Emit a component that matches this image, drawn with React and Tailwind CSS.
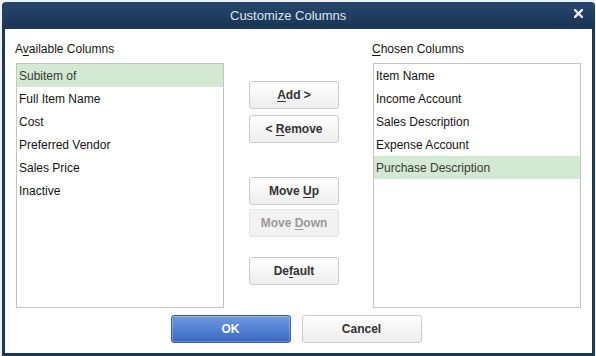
import React from "react";

const font = { fontFamily: '"Liberation Sans", Arial, sans-serif' };

function U({ children }) {
  return <span className="underline underline-offset-[2px] decoration-1">{children}</span>;
}

function SideButton({ children, disabled, className = "" }) {
  return (
    <div
      className={
        "h-[28px] w-[90px] flex items-center justify-center rounded-[3px] border text-[12px] font-bold " +
        (disabled
          ? "border-[#e2e2e2] bg-[#f2f2f2] text-[#9a9a9a] "
          : "border-[#cbcbcb] bg-gradient-to-b from-[#ffffff] to-[#ededed] text-[#333333] ") +
        className
      }
    >
      <span>{children}</span>
    </div>
  );
}

function ListBox({ items, selected }) {
  return (
    <div className="h-[245px] w-[208px] border border-[#c4c4c4] bg-white">
      {items.map((it, i) => (
        <div
          key={it}
          className={
            "h-[23px] flex items-center pl-[2px] text-[12px] " +
            (i === selected ? "bg-[#d3e9d1] text-[#3a3a3a]" : "text-[#141414]")
          }
        >
          {it}
        </div>
      ))}
    </div>
  );
}

export default function App() {
  return (
    <div className="w-[596px] h-[356px] bg-[#eef1f5] relative overflow-hidden" style={font}>
      <div className="absolute left-[2px] top-[2px] w-[593px] h-[354px] flex flex-col">
        {/* Title bar */}
        <div className="h-[27px] rounded-t-[4px] bg-gradient-to-b from-[#25476d] to-[#1b3553] flex items-center relative">
          <div className="absolute left-[228px] top-0 h-[27px] flex items-center text-[13px] text-[#dce5ee]">
            Customize Columns
          </div>
          <svg className="absolute left-[572px] top-[7px]" width="9" height="9" viewBox="0 0 9 9">
            <path d="M1 1 L8 8 M8 1 L1 8" stroke="#e8edf3" strokeWidth="2.4" strokeLinecap="square" />
          </svg>
        </div>
        {/* Body */}
        <div className="flex-1 border-x-[3px] border-b-[3px] border-[#1d3756] bg-white flex flex-col">
          <div className="flex pt-[13px] pl-[11px]">
            <div className="flex flex-col">
              <div className="h-[14px] leading-[14px] text-[12px] text-[#141414] ml-[-1px] mb-[7px]">
                A<U>v</U>ailable Columns
              </div>
              <ListBox
                items={["Subitem of", "Full Item Name", "Cost", "Preferred Vendor", "Sales Price", "Inactive"]}
                selected={0}
              />
            </div>
            <div className="flex flex-col ml-[25px] pt-[39px]">
              <SideButton>
                <U>A</U>dd &gt;
              </SideButton>
              <SideButton className="mt-[6px]">
                &lt; <U>R</U>emove
              </SideButton>
              <SideButton className="mt-[34px]">
                Move <U>U</U>p
              </SideButton>
              <SideButton disabled className="mt-[4px]">
                Move <U>D</U>own
              </SideButton>
              <SideButton className="mt-[20px]">
                De<U>f</U>ault
              </SideButton>
            </div>
            <div className="flex flex-col ml-[34px]">
              <div className="h-[14px] leading-[14px] text-[12px] text-[#141414] ml-[-1px] mb-[7px]">
                <U>C</U>hosen Columns
              </div>
              <ListBox
                items={["Item Name", "Income Account", "Sales Description", "Expense Account", "Purchase Description"]}
                selected={4}
              />
            </div>
          </div>
          <div className="flex justify-center gap-[11px] mt-[7px] pr-[5px]">
            <div className="h-[28px] w-[120px] rounded-[3px] border border-[#3d5f9c] bg-gradient-to-b from-[#6f9be0] to-[#3a66c3] flex items-center justify-center text-[12px] font-bold text-white shadow-[inset_0_0_0_1px_rgba(255,255,255,0.25)]">
              OK
            </div>
            <div className="h-[28px] w-[120px] rounded-[3px] border border-[#cbcbcb] bg-gradient-to-b from-[#ffffff] to-[#ededed] flex items-center justify-center text-[12px] font-bold text-[#333333]">
              Cancel
            </div>
          </div>
        </div>
      </div>
    </div>
  );
}
